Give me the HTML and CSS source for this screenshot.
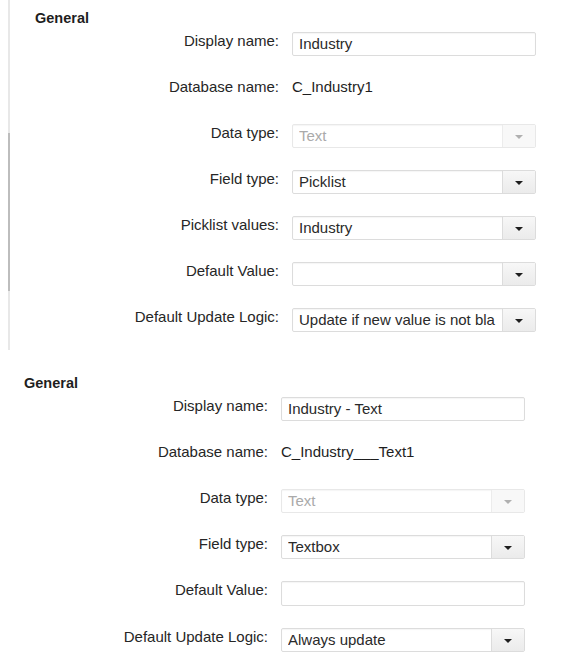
FILE: index.html
```html
<!DOCTYPE html>
<html>
<head>
<meta charset="utf-8">
<link rel="stylesheet" href="styles.css">
</head>
<body>
<div class="page">
  <section class="panel panel-top">
    <h2 class="panel-title">General</h2>
    <div class="form">
      <div class="label">Display name:</div>
      <div class="field"><span class="text">Industry</span></div>

      <div class="label">Database name:</div>
      <div class="value">C_Industry1</div>

      <div class="label">Data type:</div>
      <div class="field select disabled"><span class="text">Text</span><span class="btn"><span class="caret"></span></span></div>

      <div class="label">Field type:</div>
      <div class="field select"><span class="text">Picklist</span><span class="btn"><span class="caret"></span></span></div>

      <div class="label">Picklist values:</div>
      <div class="field select"><span class="text">Industry</span><span class="btn"><span class="caret"></span></span></div>

      <div class="label">Default Value:</div>
      <div class="field select"><span class="text"></span><span class="btn"><span class="caret"></span></span></div>

      <div class="label">Default Update Logic:</div>
      <div class="field select"><span class="text">Update if new value is not bla</span><span class="btn"><span class="caret"></span></span></div>
    </div>
  </section>

  <section class="panel panel-bottom">
    <h2 class="panel-title">General</h2>
    <div class="form">
      <div class="label">Display name:</div>
      <div class="field"><span class="text">Industry - Text</span></div>

      <div class="label">Database name:</div>
      <div class="value">C_Industry___Text1</div>

      <div class="label">Data type:</div>
      <div class="field select disabled"><span class="text">Text</span><span class="btn"><span class="caret"></span></span></div>

      <div class="label">Field type:</div>
      <div class="field select"><span class="text">Textbox</span><span class="btn"><span class="caret"></span></span></div>

      <div class="label">Default Value:</div>
      <div class="field tall"><span class="text"></span></div>

      <div class="label">Default Update Logic:</div>
      <div class="field select"><span class="text">Always update</span><span class="btn"><span class="caret"></span></span></div>
    </div>
  </section>
</div>
</body>
</html>
```

FILE: styles.css
```css
* { box-sizing: border-box; }

html, body {
  margin: 0;
  padding: 0;
  background: #ffffff;
}

body {
  font-family: "Liberation Sans", Arial, sans-serif;
  font-size: 15px;
  color: #2a2a2a;
}

.page {
  display: flex;
  flex-direction: column;
}

.panel {
  padding-top: 10px;
}

.panel-top {
  margin-left: 8px;
  padding-left: 25px;
  padding-bottom: 18px;
  border-left: 2px solid #e6e6e6;
  border-image: linear-gradient(to bottom, #e8e8e8 0, #e8e8e8 133px, #bdbdbd 133px, #bdbdbd 290px, #e8e8e8 290px, #e8e8e8 100%) 1;
}

.panel-bottom {
  margin-top: 15px;
  padding-left: 24px;
}

.panel-title {
  margin: 0 0 5px 0;
  font-size: 14.5px;
  line-height: 17px;
  font-weight: bold;
  color: #1e1e1e;
}

.form {
  display: grid;
  grid-template-columns: 244px 244px;
  column-gap: 13px;
  row-gap: 22px;
  grid-auto-rows: minmax(24px, auto);
}

.label {
  text-align: right;
  line-height: 18px;
  align-self: start;
  white-space: nowrap;
  color: #262626;
}

.value {
  line-height: 18px;
  align-self: start;
  color: #1e1e1e;
  white-space: nowrap;
}

.field {
  display: flex;
  align-items: stretch;
  height: 24px;
  border: 1px solid #dcdcdc;
  border-radius: 2px;
  background: #ffffff;
  box-shadow: inset 0 1px 1px rgba(0, 0, 0, 0.04);
  align-self: start;
}

.field.tall {
  height: 25px;
}

.field .text {
  flex: 1;
  min-width: 0;
  margin: 0 6px 0 6px;
  overflow: hidden;
  white-space: nowrap;
  line-height: 22px;
  color: #2a2a2a;
}

.field.disabled {
  border-color: #e8e8e8;
}

.field.disabled .text {
  color: #aaaaaa;
}

.btn {
  width: 33px;
  flex: none;
  display: flex;
  align-items: center;
  justify-content: center;
  border-left: 1px solid #dcdcdc;
  background: linear-gradient(to bottom, #f7f7f7, #ebebeb);
}

.caret {
  width: 0;
  height: 0;
  border-left: 4px solid transparent;
  border-right: 4px solid transparent;
  border-top: 4px solid #1e1e1e;
  margin-top: 2px;
}

.disabled .btn {
  border-left-color: #ececec;
  background: #f8f8f8;
}

.disabled .caret {
  border-top-color: #b0b0b0;
}
```
